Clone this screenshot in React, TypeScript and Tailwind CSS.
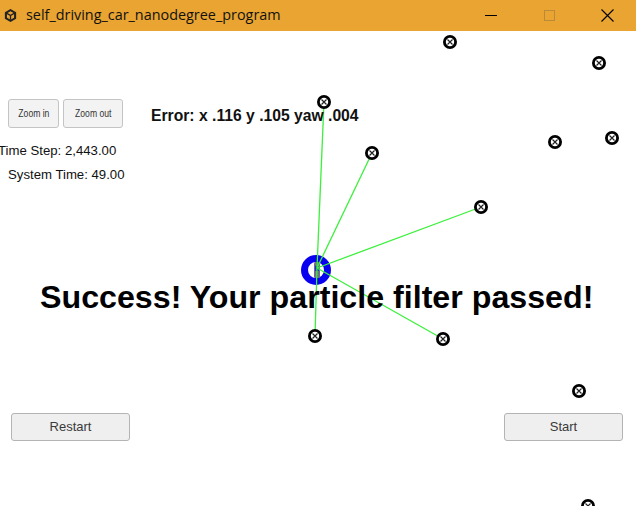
const markers: [number, number][] = [
  [450, 42],
  [599, 63],
  [324, 102],
  [372, 153],
  [555, 142],
  [612, 138],
  [481, 207],
  [315, 336],
  [443, 339],
  [579, 391],
  [588, 506],
]

const observed: [number, number][] = [
  [324, 102],
  [372, 153],
  [481, 207],
  [315, 336],
  [443, 339],
]

const car = { x: 317, y: 270 }

function Marker({ x, y }: { x: number; y: number }) {
  return (
    <g>
      <circle cx={x} cy={y} r={5.6} fill="white" stroke="black" strokeWidth={2.8} />
      <path
        d={`M${x - 2.5} ${y - 2.5} L${x + 2.5} ${y + 2.5} M${x + 2.5} ${y - 2.5} L${x - 2.5} ${y + 2.5}`}
        stroke="#222"
        strokeWidth={1.2}
      />
    </g>
  )
}

function UnityLogo() {
  return (
    <svg width="15" height="15" viewBox="0 0 16 16">
      <path d="M8 1 L14 4.5 L14 11.5 L8 15 L2 11.5 L2 4.5 Z" fill="#222" />
      <path d="M8 8 L8 12.6 L4.2 10.3 L4.2 5.7 Z" fill="#E9A431" />
      <path d="M8 8 L11.8 5.7 L11.8 10.3 L8 12.6 Z" fill="#E9A431" />
      <path d="M8 3.5 L11.8 5.7 L8 8 L4.2 5.7 Z" fill="#E9A431" />
      <path d="M8 8 L8 12.6 M8 8 L4.2 5.7 M8 8 L11.8 5.7" stroke="#222" strokeWidth={1.4} />
    </svg>
  )
}

function SimButton({ label, className }: { label: string; className: string }) {
  return (
    <button
      className={`h-[28px] rounded-[3px] border border-[#b4b4b4] bg-[#efefef] text-[13px] text-[#3a3a3a] ${className}`}
    >
      {label}
    </button>
  )
}

function ZoomButton({ label, className }: { label: string; className: string }) {
  return (
    <button
      className={`h-[29px] rounded-[3px] border border-[#c4c4c4] bg-[#f3f3f3] text-[11px] text-[#333] flex items-center justify-center ${className}`}
    >
      <span className="inline-block scale-x-[0.78]">{label}</span>
    </button>
  )
}

export default function App() {
  return (
    <div className="w-[636px] h-[506px] overflow-hidden bg-white font-['Liberation_Sans',Arial,sans-serif]">
      <div className="h-[31px] bg-[#E9A431] flex items-center">
        <div className="pl-[3px] pr-[8px] flex items-center">
          <UnityLogo />
        </div>
        <span className="text-[14.4px] text-[#111] font-['Open_Sans','Noto_Sans',sans-serif] -mt-[1px]">
          self_driving_car_nanodegree_program
        </span>
        <div className="ml-auto flex items-center h-full">
          <div className="w-[58px] h-full flex items-center justify-center">
            <div className="w-[12px] h-px bg-black" />
          </div>
          <div className="w-[58px] h-full flex items-center justify-center">
            <div className="w-[11px] h-[11px] border border-[#bb8a38]" />
          </div>
          <div className="w-[58px] h-full flex items-center justify-center">
            <svg width="13" height="13" viewBox="0 0 13 13">
              <path d="M0.5 0.5 L12.5 12.5 M12.5 0.5 L0.5 12.5" stroke="black" strokeWidth={1.1} />
            </svg>
          </div>
        </div>
      </div>

      <div className="relative h-[475px]">
        <svg className="absolute inset-0" width="636" height="475" viewBox="0 31 636 475">
          <circle cx={car.x - 1} cy={car.y} r={11.5} fill="white" stroke="#0a00f0" strokeWidth={7} />
          <rect x={car.x - 3} y={car.y - 8} width={6} height={16} rx={1.5} fill="#6b6b8a" />
          <rect x={car.x - 2} y={car.y - 4} width={4} height={5} fill="#2a2ad8" />
          {observed.map(([x, y], i) => (
            <line key={i} x1={car.x} y1={car.y - 2} x2={x} y2={y} stroke="#3cf03c" strokeWidth={1.3} />
          ))}
          {markers.map(([x, y], i) => (
            <Marker key={i} x={x} y={y} />
          ))}
        </svg>

        <div className="relative flex flex-col">
          <div className="flex items-start pt-[68px] pl-[8px]">
            <ZoomButton label="Zoom in" className="w-[51px]" />
            <ZoomButton label="Zoom out" className="ml-[4px] w-[60px]" />
            <span className="ml-[28px] mt-[8px] text-[15.7px] font-bold text-[#111] leading-[18px] whitespace-nowrap">
              Error: x .116 y .105 yaw .004
            </span>
          </div>
          <div className="mt-[15px] -ml-[2px] text-[13.2px] text-[#111] leading-[16px] whitespace-nowrap">
            Time Step: 2,443.00
          </div>
          <div className="pl-[8px] mt-[8px] text-[13.2px] text-[#111] leading-[16px] whitespace-nowrap">
            System Time: 49.00
          </div>
          <div className="mt-[96px] pl-[40px] text-[32.2px] font-bold text-black leading-[36px] whitespace-nowrap">
            Success! Your particle filter passed!
          </div>
          <div className="mt-[98px] flex justify-between pl-[11px] pr-[13px]">
            <SimButton label="Restart" className="w-[119px]" />
            <SimButton label="Start" className="w-[119px]" />
          </div>
        </div>
      </div>
    </div>
  )
}
